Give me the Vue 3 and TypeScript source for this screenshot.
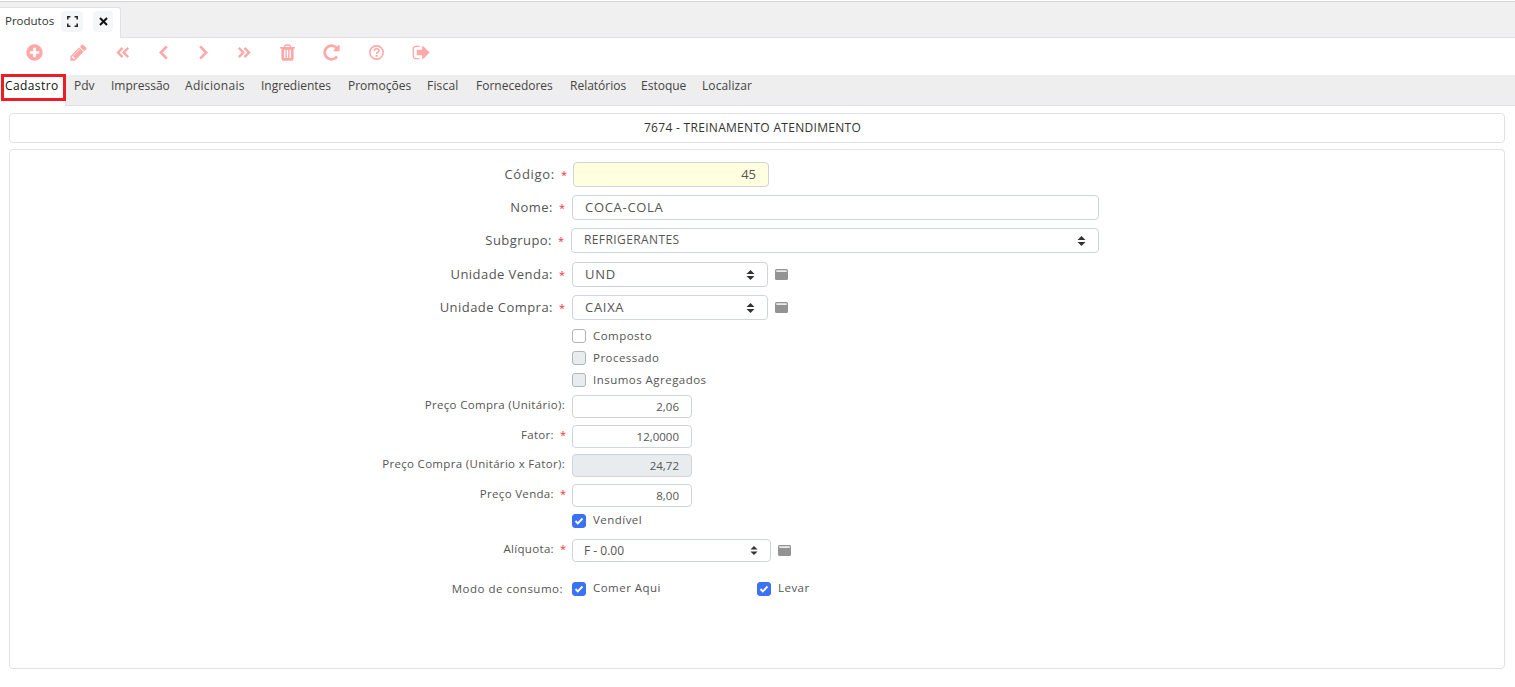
<script setup lang="ts">
interface Tool { d?: string; stroke?: string; sw?: number; w: number }
const fa = {
  plus: 'M1344 960v-128q0-26-19-45t-45-19h-256v-256q0-26-19-45t-45-19h-128q-26 0-45 19t-19 45v256h-256q-26 0-45 19t-19 45v128q0 26 19 45t45 19h256v256q0 26 19 45t45 19h128q26 0 45-19t19-45v-256h256q26 0 45-19t19-45zm320-64q0 209-103 385.5t-279.5 279.5-385.5 103-385.5-103-279.5-279.5-103-385.5 103-385.5 279.5-279.5 385.5-103 385.5 103 279.5 279.5 103 385.5z',
  pencil: 'M491 1536l91-91-235-235-91 91v107h128v128h107zm523-928q0-22-22-22-10 0-17 7l-542 542q-7 7-7 17 0 22 22 22 10 0 17-7l542-542q7-7 7-17zm-54-192l416 416-832 832h-416v-416zm683 96q0 53-37 90l-166 166-416-416 166-165q36-38 90-38 53 0 91 38l235 234q37 39 37 91z',
  trash: 'M704 1376v-704q0-14-9-23t-23-9h-64q-14 0-23 9t-9 23v704q0 14 9 23t23 9h64q14 0 23-9t9-23zm256 0v-704q0-14-9-23t-23-9h-64q-14 0-23 9t-9 23v704q0 14 9 23t23 9h64q14 0 23-9t9-23zm256 0v-704q0-14-9-23t-23-9h-64q-14 0-23 9t-9 23v704q0 14 9 23t23 9h64q14 0 23-9t9-23zm-544-992h448l-48-117q-7-9-17-11h-317q-10 2-17 11zm928 32v64q0 14-9 23t-23 9h-96v948q0 83-47 143.5t-113 60.5h-832q-66 0-113-58.5t-47-141.5v-952h-96q-14 0-23-9t-9-23v-64q0-14 9-23t23-9h309l70-167q15-37 54-63t79-26h320q40 0 79 26t54 63l70 167h309q14 0 23 9t9 23z',
  repeat: 'M1664 256v448q0 26-19 45t-45 19h-448q-42 0-59-40-17-39 14-69l138-138q-148-137-349-137-104 0-198.5 40.5t-163.5 109.5-109.5 163.5-40.5 198.5 40.5 198.5 109.5 163.5 163.5 109.5 198.5 40.5q119 0 225-52t179-147q7-10 23-12 15 0 25 9l137 138q9 8 9.5 20.5t-7.5 22.5q-109 132-264 204.5t-327 72.5q-156 0-298-61t-245-164-164-245-61-298 61-298 164-245 245-164 298-61q147 0 284.5 55.5t244.5 156.5l130-129q29-31 70-14 39 17 39 59z',
  signout: 'M704 1440q0 4 1 20t.5 26.5-3 23.5-10 19.5-20.5 6.5h-320q-119 0-203.5-84.5t-84.5-203.5v-704q0-119 84.5-203.5t203.5-84.5h320q13 0 22.5 9.5t9.5 22.5q0 4 1 20t.5 26.5-3 23.5-10 19.5-20.5 6.5h-320q-66 0-113 47t-47 113v704q0 66 47 113t113 47h312l11.5 1 11.5 3 8 5.5 7 9 2 13.5zm928-544q0 26-19 45l-544 544q-19 19-45 19t-45-19-19-45v-288h-448q-26 0-45-19t-19-45v-384q0-26 19-45t45-19h448v-288q0-26 19-45t45-19 45 19l544 544q19 19 19 45z'
}
const tools: Tool[] = [
  { d: fa.plus, w: 45 },
  { d: fa.pencil, w: 44.5 },
  { stroke: 'M10 5.2 5.3 10l4.7 4.8M16 5.2 11.3 10l4.7 4.8', sw: 2.5, w: 42.5 },
  { stroke: 'M13.5 3.6 7.2 10l6.3 6.4', sw: 2.8, w: 40 },
  { stroke: 'M6.5 3.6 12.8 10l-6.3 6.4', sw: 2.8, w: 40 },
  { stroke: 'M4 5.2 8.7 10 4 14.8M10 5.2l4.7 4.8-4.7 4.8', sw: 2.5, w: 42 },
  { d: fa.trash, w: 44 },
  { d: fa.repeat, w: 44.5 },
  { w: 44.5 },
  { d: fa.signout, w: 45 }
]
const tabs: { t: string; w: number; s?: number }[] = [
  { t: 'Pdv', w: 37 }, { t: 'Impressão', w: 74 }, { t: 'Adicionais', w: 76, s: .3 }, { t: 'Ingredientes', w: 87 },
  { t: 'Promoções', w: 79 }, { t: 'Fiscal', w: 49, s: .2 }, { t: 'Fornecedores', w: 94 }, { t: 'Relatórios', w: 71 },
  { t: 'Estoque', w: 61 }, { t: 'Localizar', w: 51, s: .1 }
]
</script>

<template>
  <div class="page">
    <div class="tabbar">
      <div class="tab">
        <span class="tab-title">Produtos</span>
        <span class="tabbtn first">
          <svg width="11" height="11" viewBox="0 0 11 11" fill="none" stroke="#222" stroke-width="1.5"><path d="M.8 3.4V.8h2.6M7.6.8h2.6v2.6M10.2 7.6v2.6H7.6M3.4 10.2H.8V7.6" /></svg>
        </span>
        <span class="tabbtn second">
          <svg width="9" height="9" viewBox="0 0 9 9" fill="none" stroke="#111" stroke-width="2"><path d="M1 1l7 7M8 1L1 8" /></svg>
        </span>
      </div>
    </div>
    <div class="toolbar">
      <span v-for="(tool, i) in tools" :key="i" class="tool" :style="{ width: tool.w + 'px' }">
        <svg v-if="tool.d" width="19" height="19" viewBox="0 0 1792 1792" fill="#ffa8a8"><path :d="tool.d" /></svg>
        <svg v-else-if="tool.stroke" width="19" height="19" viewBox="0 0 20 20" fill="none" stroke="#ffa8a8" :stroke-width="tool.sw"><path :d="tool.stroke" /></svg>
        <svg v-else width="19" height="19" viewBox="0 0 20 20" fill="none" stroke="#ffa8a8"><circle cx="10" cy="10" r="7" stroke-width="1.7" /><path d="M7.7 8.3c0-3 4.8-3 4.8-.2 0 1.7-2.4 1.8-2.4 3.4" stroke-width="1.7" /><path d="M9.1 12.6h2v1.9h-2z" fill="#ffa8a8" stroke="none" /></svg>
      </span>
    </div>
    <nav class="nav">
      <span class="nav-active"><span class="red-box">Cadastro</span></span>
      <span v-for="x in tabs" :key="x.t" class="nav-item" :style="{ width: x.w + 'px', letterSpacing: (x.s ?? 0) + 'px' }">{{ x.t }}</span>
    </nav>
    <main class="content">
      <div class="title">7674 - TREINAMENTO ATENDIMENTO</div>
      <section class="form">
        <div class="row r-codigo">
          <label class="lab big wide">Código:<i class="req">*</i></label>
          <div class="inp big yellow right w196 shift1">45</div>
        </div>
        <div class="row r-nome">
          <label class="lab big p2">Nome:<i class="req">*</i></label>
          <div class="inp big spaced w527">COCA-COLA</div>
        </div>
        <div class="row r-sub">
          <label class="lab big p3">Subgrupo:<i class="req">*</i></label>
          <div class="inp sel w528 shiftm1 small-text spaced-sm">REFRIGERANTES
            <svg class="updown" width="9" height="12" viewBox="0 0 9 12" fill="#333"><path d="M4.5 1L8.5 5H.5zM4.5 11L.5 7h8z" /></svg>
          </div>
        </div>
        <div class="row r-un">
          <label class="lab big p2">Unidade Venda:<i class="req">*</i></label>
          <div class="inp sel spaced w196">UND
            <svg class="updown" width="9" height="12" viewBox="0 0 9 12" fill="#333"><path d="M4.5 1L8.5 5H.5zM4.5 11L.5 7h8z" /></svg>
          </div>
          <svg class="win" width="13" height="11" viewBox="0 0 13 11"><rect width="13" height="11" rx="1.5" fill="#939393" /><rect x="1.3" y="1.3" width="10.4" height="1.6" fill="#f4f4f4" /></svg>
        </div>
        <div class="row r-uc">
          <label class="lab big p2">Unidade Compra:<i class="req">*</i></label>
          <div class="inp sel spaced w196">CAIXA
            <svg class="updown" width="9" height="12" viewBox="0 0 9 12" fill="#333"><path d="M4.5 1L8.5 5H.5zM4.5 11L.5 7h8z" /></svg>
          </div>
          <svg class="win" width="13" height="11" viewBox="0 0 13 11"><rect width="13" height="11" rx="1.5" fill="#939393" /><rect x="1.3" y="1.3" width="10.4" height="1.6" fill="#f4f4f4" /></svg>
        </div>
        <div class="row check-row r-c1"><span class="lab"></span><span class="cb"></span><span class="cbl">Composto</span></div>
        <div class="row check-row r-c2"><span class="lab"></span><span class="cb off"></span><span class="cbl">Processado</span></div>
        <div class="row check-row r-c3"><span class="lab"></span><span class="cb off"></span><span class="cbl">Insumos Agregados</span></div>
        <div class="row r-p1">
          <label class="lab sm">Preço Compra (Unitário):</label>
          <div class="inp sm right w120">2,06</div>
        </div>
        <div class="row r-p2">
          <label class="lab sm p1">Fator:<i class="req">*</i></label>
          <div class="inp sm right w120">12,0000</div>
        </div>
        <div class="row r-p3">
          <label class="lab sm">Preço Compra (Unitário x Fator):</label>
          <div class="inp sm right w120 disabled">24,72</div>
        </div>
        <div class="row r-p4">
          <label class="lab sm p1">Preço Venda:<i class="req">*</i></label>
          <div class="inp sm right w120">8,00</div>
        </div>
        <div class="row check-row r-v"><span class="lab"></span><span class="cb on"><svg width="10" height="8" viewBox="0 0 10 8" fill="none" stroke="#fff" stroke-width="1.9"><path d="M1.5 4l2.3 2.3L8.5 1.5" /></svg></span><span class="cbl up">Vendível</span></div>
        <div class="row r-al">
          <label class="lab sm p1">Alíquota:<i class="req">*</i></label>
          <div class="inp sm sel w199 small-text al-text">F - 0.00
            <svg class="updown" width="8" height="11" viewBox="0 0 9 12" fill="#333"><path d="M4.5 1L8.5 5H.5zM4.5 11L.5 7h8z" /></svg>
          </div>
          <svg class="win" width="13" height="11" viewBox="0 0 13 11"><rect width="13" height="11" rx="1.5" fill="#939393" /><rect x="1.3" y="1.3" width="10.4" height="1.6" fill="#f4f4f4" /></svg>
        </div>
        <div class="row check-row r-m">
          <span class="lab sm p2 modo">Modo de consumo:</span>
          <span class="cb on"><svg width="10" height="8" viewBox="0 0 10 8" fill="none" stroke="#fff" stroke-width="1.9"><path d="M1.5 4l2.3 2.3L8.5 1.5" /></svg></span>
          <span class="cbl up consume">Comer Aqui</span>
          <span class="cb on"><svg width="10" height="8" viewBox="0 0 10 8" fill="none" stroke="#fff" stroke-width="1.9"><path d="M1.5 4l2.3 2.3L8.5 1.5" /></svg></span>
          <span class="cbl up">Levar</span>
        </div>
      </section>
    </main>
  </div>
</template>

<style>
html, body { margin: 0; background: #fff; }
</style>

<style scoped>
.page { width: 1515px; height: 687px; overflow: hidden; box-sizing: border-box; background: #fff; color: #555; font-family: "Open Sans", "Liberation Sans", sans-serif; font-size: 12px; }
.tabbar { margin-top: 1px; height: 37px; box-sizing: border-box; background: #f0f0f0; border-top: 1px solid #d4d4d4; border-bottom: 1px solid #e0e0e6; padding-top: 5px; }
.tab { width: 121px; height: 31px; box-sizing: border-box; background: #fff; border: 1px solid #e0e0e6; border-left: 0; border-bottom: 0; border-radius: 0 3px 0 0; display: flex; align-items: flex-start; padding: 3px 0 0 5px; color: #333; }
.tab-title { font-size: 11.5px; line-height: 20px; width: 49px; white-space: nowrap; }
.tabbtn { width: 22px; height: 21px; background: #f5f6f8; border-radius: 4px; display: flex; align-items: center; justify-content: center; }
.tabbtn.first { margin-left: 7px; }
.tabbtn.second { width: 20px; margin-left: 10px; }
.toolbar { height: 37px; box-sizing: border-box; display: flex; align-items: flex-start; padding: 5px 0 0 11.5px; }
.tool { display: flex; justify-content: center; }
.nav { height: 31px; box-sizing: border-box; background: #eee; border-bottom: 1px solid #e0e0e6; display: flex; color: #444; align-items: flex-start; line-height: 22px; }
.nav-active { width: 66px; height: 31px; flex: none; box-sizing: border-box; background: #fff; border-right: 1px solid #e0e0e6; margin-right: 8px; position: relative; }
.red-box { position: absolute; left: 1px; top: -1px; width: 65px; height: 27px; box-sizing: border-box; border: 3px solid #ee1c25; color: #111; padding-left: 1px; line-height: 18px; letter-spacing: .4px; white-space: nowrap; }
.nav-item { white-space: nowrap; }
.content { padding: 7px 10px 0 9px; }
.title { height: 30px; box-sizing: border-box; border: 1px solid #dfe2e6; border-radius: 4px; text-align: center; line-height: 28px; color: #333; padding-right: 9px; letter-spacing: .3px; }
.form { margin-top: 6px; height: 520px; box-sizing: border-box; border: 1px solid #dfe2e6; border-radius: 4px; padding-top: 12px; }
.row { display: flex; align-items: center; }
.lab { width: 555px; flex: none; box-sizing: border-box; text-align: right; margin-right: 7px; color: #555; }
.lab.big { font-size: 13px; letter-spacing: .45px; margin-top: -2px; }
.lab.wide { letter-spacing: .7px; }
.lab.sm { font-size: 11.5px; letter-spacing: .32px; margin-top: -4px; }
.lab.modo { margin-top: -2px; letter-spacing: .5px; }
.p1 { padding-right: 1px; }
.p2 { padding-right: 2px; }
.p3 { padding-right: 3px; }
.req { color: #e33; font-style: normal; margin-left: 6px; margin-right: -2px; font-size: 11px; letter-spacing: 0; }
.inp { box-sizing: border-box; border: 1px solid #ced4da; border-radius: 4px; display: flex; align-items: center; height: 25px; padding: 0 12px 2px; font-size: 13px; color: #555; background: #fff; position: relative; }
.inp.sm { height: 23px; font-size: 11.5px; padding-bottom: 0; }
.inp.right { justify-content: flex-end; }
.spaced { letter-spacing: .7px; }
.spaced-sm { letter-spacing: .4px; }
.yellow { background: #ffffe0; }
.disabled { background: #e9ecef; }
.w196 { width: 196px; }
.w527 { width: 527px; }
.w528 { width: 528px; }
.w120 { width: 120px; }
.w199 { width: 199px; }
.shift1 { margin-left: 1px; }
.shiftm1 { margin-left: -1px; }
.small-text { font-size: 12px; }
.inp.al-text { font-size: 12px; padding-left: 11px; }
.updown { position: absolute; right: 12px; top: 50%; margin-top: -6px; }
.win { margin-left: 7px; margin-top: -1px; }
.check-row { height: 20px; }
.cb { width: 14px; height: 14px; box-sizing: border-box; flex: none; border: 1px solid #adb5bd; border-radius: 3px; background: #fff; display: flex; align-items: center; justify-content: center; }
.cb.off { background: #e9ecef; }
.cb.on { background: #3b71f3; border-color: #3b71f3; }
.cbl { margin-left: 7px; margin-top: -2px; font-size: 11.5px; color: #555; letter-spacing: .47px; white-space: nowrap; }
.cbl.up { margin-top: -3px; }
.consume { width: 164px; }
.r-nome { margin-top: 8px; }
.r-sub { margin-top: 8px; }
.r-un { margin-top: 9px; }
.r-uc { margin-top: 8px; }
.r-c1 { margin-top: 6px; }
.r-c2 { margin-top: 2px; }
.r-c3 { margin-top: 2px; }
.r-p1 { margin-top: 5px; }
.r-p2 { margin-top: 7px; }
.r-p3 { margin-top: 6px; }
.r-p4 { margin-top: 7px; }
.r-v { margin-top: 4px; }
.r-al { margin-top: 8px; }
.r-m { margin-top: 17px; }
</style>
